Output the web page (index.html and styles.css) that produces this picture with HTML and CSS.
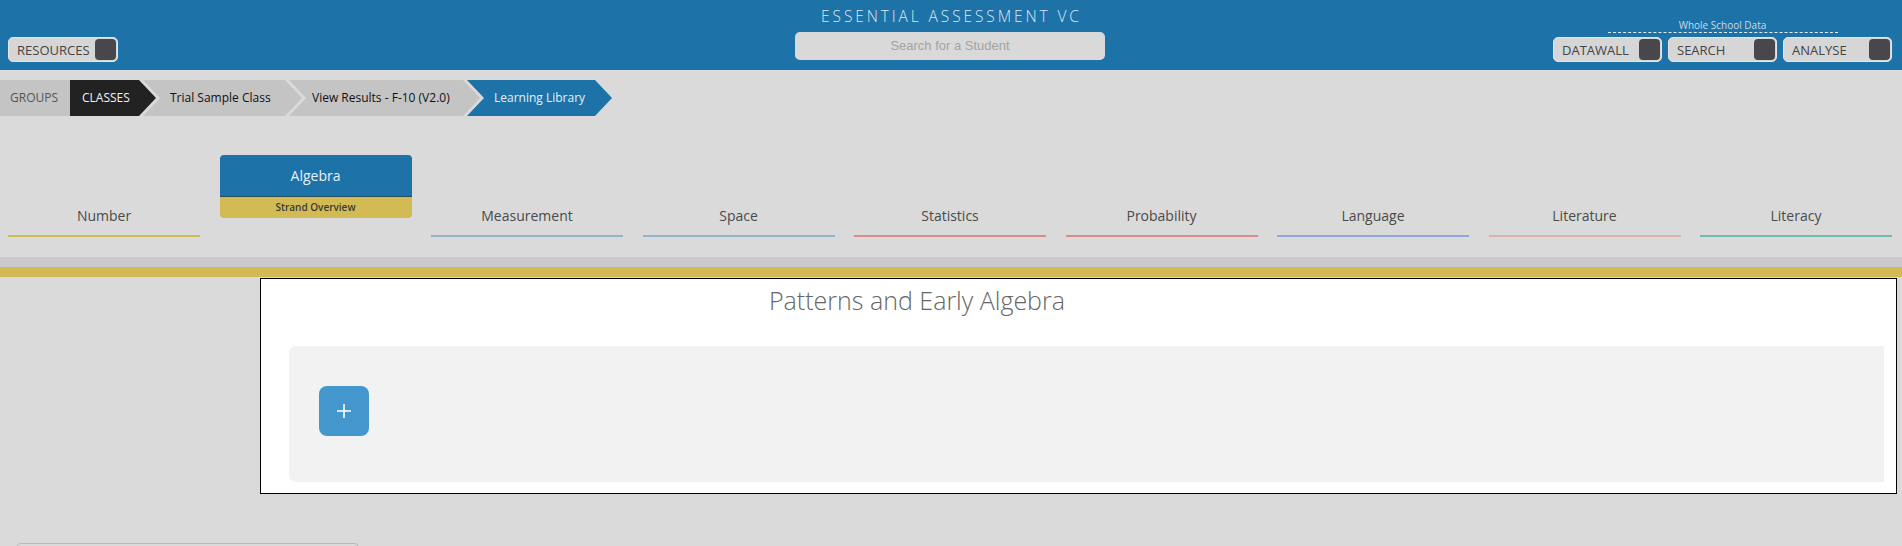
FILE: index.html
```html
<!DOCTYPE html>
<html lang="en">
<head>
<meta charset="utf-8">
<title>Essential Assessment VC - Learning Library</title>
<link rel="stylesheet" href="styles.css">
</head>
<body>
<div class="page">
  <header class="topbar">
    <div class="top-left">
      <div class="pill pill-wide">RESOURCES<span class="pill-knob"></span></div>
    </div>
    <div class="top-center">
      <div class="brand">ESSENTIAL ASSESSMENT VC</div>
      <div class="search">Search for a Student</div>
    </div>
    <div class="top-right">
      <div class="wsd">Whole School Data</div>
      <div class="pill-row">
        <div class="pill">DATAWALL<span class="pill-knob"></span></div>
        <div class="pill">SEARCH<span class="pill-knob"></span></div>
        <div class="pill">ANALYSE<span class="pill-knob"></span></div>
      </div>
    </div>
  </header>

  <nav class="crumbs">
    <div class="crumb crumb-groups">GROUPS</div>
    <div class="crumb crumb-classes">CLASSES</div>
    <div class="crumb crumb-chev crumb-trial">Trial Sample Class</div>
    <div class="crumb crumb-chev crumb-view">View Results - F-10 (V2.0)</div>
    <div class="crumb crumb-chev crumb-active">Learning Library</div>
  </nav>

  <div class="strands">
    <div class="strand line-number"><span class="strand-label">Number</span></div>
    <div class="strand-active">
      <div class="strand-active-top">Algebra</div>
      <div class="strand-active-sub">Strand Overview</div>
    </div>
    <div class="strand line-measure"><span class="strand-label">Measurement</span></div>
    <div class="strand line-space"><span class="strand-label">Space</span></div>
    <div class="strand line-stats"><span class="strand-label">Statistics</span></div>
    <div class="strand line-prob"><span class="strand-label">Probability</span></div>
    <div class="strand line-lang"><span class="strand-label">Language</span></div>
    <div class="strand line-lit"><span class="strand-label">Literature</span></div>
    <div class="strand line-literacy"><span class="strand-label">Literacy</span></div>
  </div>

  <div class="band"></div>
  <div class="gold"></div>

  <section class="panel">
    <h2 class="panel-title">Patterns and Early Algebra</h2>
    <div class="well">
      <div class="add">
        <svg width="16" height="16" viewBox="0 0 16 16" aria-hidden="true">
          <path d="M8 1V15M1 8H15" stroke="#ffffff" stroke-width="1.6" fill="none"/>
        </svg>
      </div>
    </div>
  </section>

  <div class="footer-box"></div>
</div>
</body>
</html>
```

FILE: styles.css
```css
* { box-sizing: border-box; }

html, body {
  margin: 0;
  padding: 0;
  background: #dadada;
}

body {
  font-family: "Open Sans", "Noto Sans", "DejaVu Sans", sans-serif;
  color: #444;
}

.page {
  width: 1902px;
  height: 546px;
  overflow: hidden;
  background: #dadada;
}

/* ---------- Top bar ---------- */
.topbar {
  height: 70px;
  background: #1d72a8;
  display: grid;
  grid-template-columns: 1fr auto 1fr;
  padding: 0 10px 0 8px;
}

.top-left {
  padding-top: 37px;
}

.top-center {
  display: flex;
  flex-direction: column;
  align-items: center;
  padding-top: 5px;
}

.brand {
  font-size: 15.5px;
  font-weight: 300;
  line-height: 22px;
  letter-spacing: 2.9px;
  color: #dde7f0;
  margin-right: -2.9px;
}

.search {
  margin-top: 5px;
  width: 310px;
  height: 28px;
  border-radius: 5px;
  background: #d9d9d9;
  font-family: "Liberation Sans", Arial, sans-serif;
  font-size: 13px;
  line-height: 28px;
  text-align: center;
  color: #a3a3a3;
}

.top-right {
  justify-self: end;
  display: flex;
  flex-direction: column;
  align-items: center;
}

.wsd {
  margin-top: 19px;
  width: 230px;
  height: 14px;
  font-size: 10px;
  line-height: 13px;
  text-align: center;
  color: #c9dbe8;
  border-bottom: 1px dashed #e3ebf1;
}

.pill-row {
  display: flex;
  gap: 6px;
  margin-top: 4px;
}

.pill {
  width: 109px;
  height: 25px;
  display: flex;
  align-items: center;
  justify-content: space-between;
  padding: 0 1px 0 8px;
  background: #d6d6d6;
  border: 1px solid #e6e6e6;
  border-radius: 5px;
  font-size: 13px;
  color: #444;
}

.pill-wide {
  width: 110px;
}

.pill-knob {
  width: 21px;
  height: 21px;
  border-radius: 4px;
  background: #48484c;
}

/* ---------- Breadcrumbs ---------- */
.crumbs {
  display: flex;
  height: 36px;
  margin-top: 10px;
}

.crumb {
  height: 36px;
  display: flex;
  align-items: center;
  padding-bottom: 1px;
  font-size: 12px;
  white-space: nowrap;
}

.crumb-groups {
  width: 70px;
  padding-left: 10px;
  background: #c4c4c4;
  color: #555;
}

.crumb-classes {
  width: 86px;
  padding-left: 12px;
  background: #222222;
  color: #f2f2f2;
  clip-path: polygon(0 0, calc(100% - 17px) 0, 100% 50%, calc(100% - 17px) 100%, 0 100%);
}

.crumb-chev {
  margin-left: -13px;
  padding-left: 27px;
  background: #c4c4c4;
  color: #111;
  clip-path: polygon(0 0, calc(100% - 17px) 0, 100% 50%, calc(100% - 17px) 100%, 0 100%, 17px 50%);
}

.crumb-trial { width: 159px; }
.crumb-view { width: 191px; padding-left: 23px; }

.crumb-active {
  width: 145px;
  background: #1d72a8;
  color: #e9eff5;
}

/* ---------- Strand tabs ---------- */
.strands {
  margin-top: 39px;
  height: 82px;
  display: grid;
  grid-template-columns: repeat(9, 1fr);
  column-gap: 19.5px;
  padding: 0 10px 0 8px;
  align-items: start;
}

.strand {
  height: 82px;
  display: flex;
  flex-direction: column;
  justify-content: flex-end;
  align-items: center;
  padding-bottom: 9px;
  border-bottom: 2px solid #999;
}

.strand-label {
  font-size: 14px;
  line-height: 20px;
  color: #4a4a4a;
}

.line-number { border-bottom-color: #d2b94f; }
.line-measure { border-bottom-color: #8fb4cc; }
.line-space { border-bottom-color: #8fb4cc; }
.line-stats { border-bottom-color: #d98c82; }
.line-prob { border-bottom-color: #d98c82; }
.line-lang { border-bottom-color: #8fa6dc; }
.line-lit { border-bottom-color: #dcb2a7; }
.line-literacy { border-bottom-color: #6dbcae; }

.strand-active {
  display: flex;
  flex-direction: column;
}

.strand-active-top {
  height: 42px;
  background: #1d72a8;
  border-radius: 4px 4px 0 0;
  border-bottom: 1px solid #2d4a5e;
  color: #eaf0f5;
  font-size: 14px;
  line-height: 41px;
  text-align: center;
}

.strand-active-sub {
  height: 21px;
  background: #d2bb52;
  border-radius: 0 0 4px 4px;
  font-size: 10px;
  font-weight: 600;
  line-height: 21px;
  text-align: center;
  color: #3a3a3a;
}

/* ---------- Bands ---------- */
.band {
  margin-top: 20px;
  height: 10px;
  background: #cacaca;
}

.gold {
  height: 10px;
  background: #d2b953;
}

/* ---------- Panel ---------- */
.panel {
  margin: 1px 5px 0 260px;
  height: 216px;
  background: #ffffff;
  border: 1px solid #000;
  padding: 4px 12px 11px 28px;
  display: flex;
  flex-direction: column;
}

.panel-title {
  margin: 0 0 0 480px;
  font-size: 25px;
  font-weight: 300;
  line-height: 34px;
  color: #666;
}

.well {
  margin-top: 29px;
  flex: 1;
  background: #f2f2f2;
  border-radius: 7px 0 0 7px;
  display: flex;
  align-items: flex-start;
  padding: 40px 0 0 30px;
}

.add {
  width: 50px;
  height: 50px;
  border-radius: 8px;
  background: #4497cd;
  display: flex;
  align-items: center;
  justify-content: center;
}

.footer-box {
  margin: 49px 0 0 16px;
  width: 343px;
  height: 20px;
  border: 1px solid #b9b9b9;
  border-bottom: none;
  border-radius: 5px 5px 0 0;
}
```
